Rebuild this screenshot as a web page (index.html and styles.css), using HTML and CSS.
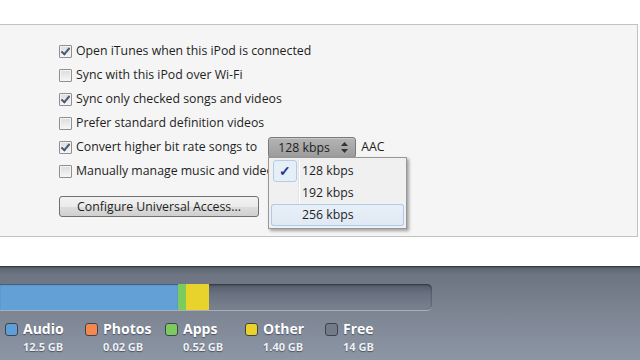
FILE: index.html
```html
<!DOCTYPE html>
<html>
<head>
<meta charset="utf-8">
<title>iPod Options</title>
<link rel="stylesheet" href="styles.css">
</head>
<body>
<div class="panel">
  <div class="opts">
    <div class="row"><span class="cb on"></span>Open iTunes when this iPod is connected</div>
    <div class="row"><span class="cb"></span>Sync with this iPod over Wi-Fi</div>
    <div class="row"><span class="cb on"></span>Sync only checked songs and videos</div>
    <div class="row"><span class="cb"></span>Prefer standard definition videos</div>
    <div class="row"><span class="cb on"></span>Convert higher bit rate songs to
      <span class="sel">128 kbps<svg class="arr" width="7" height="11" viewBox="0 0 7 11"><path d="M3.5 0L7 4H0z M0 7h7L3.5 11z" fill="#333"/></svg></span><span class="aac">AAC</span>
    </div>
    <div class="row"><span class="cb"></span>Manually manage music and videos</div>
    <div class="btn">Configure Universal Access...</div>
  </div>
  <ul class="menu">
    <li class="cur"><span class="tick">&#10003;</span>128 kbps</li>
    <li>192 kbps</li>
    <li class="hov">256 kbps</li>
  </ul>
</div>
<div class="cap">
  <div class="bar">
    <span class="seg audio" style="width:178px"></span><span class="seg apps" style="width:8px"></span><span class="seg other" style="width:23px"></span>
  </div>
  <div class="legend">
    <div class="key"><span class="sw audio"></span><b>Audio</b><i>12.5 GB</i></div>
    <div class="key"><span class="sw photos"></span><b>Photos</b><i>0.02 GB</i></div>
    <div class="key"><span class="sw apps"></span><b>Apps</b><i>0.52 GB</i></div>
    <div class="key"><span class="sw other"></span><b>Other</b><i>1.40 GB</i></div>
    <div class="key"><span class="sw free"></span><b>Free</b><i>14 GB</i></div>
  </div>
</div>
</body>
</html>
```
FILE: styles.css
```css
body{margin:0;background:#fff;font:12.3px "Open Sans",sans-serif;color:#1e1e1e;overflow:hidden;}
.panel{position:relative;margin:24px 0 0 -1px;width:637px;height:211px;background:#f5f5f5;border:1px solid #c2c2c2;}
.opts{padding:14px 0 0 59px;}
.row{height:24px;line-height:24px;display:flex;align-items:center;white-space:nowrap;}
.cb{width:11px;height:11px;border:1px solid #8e8f8f;border-radius:1px;background:linear-gradient(#dcdcdc,#f6f6f6);margin-right:4px;position:relative;box-shadow:inset 0 0 0 1px #f4f4f4;}
.cb.on:after{content:"";position:absolute;left:3px;top:0px;width:3px;height:7px;border:solid #4a5a78;border-width:0 2px 2px 0;transform:rotate(40deg);}
.sel{display:inline-block;position:relative;margin-left:11px;width:77px;height:19px;line-height:19px;padding-left:9px;background:linear-gradient(#b4b4b4,#9c9c9c);border:1px solid #7a7a7a;border-radius:3px;box-shadow:inset 0 1px 0 #c8c8c8;}
.arr{position:absolute;right:7px;top:4px;}
.aac{margin-left:5px;}
.btn{margin-top:13px;width:198px;height:19px;line-height:19px;text-align:center;border:1px solid #707070;border-radius:3px;background:linear-gradient(#f2f2f2 0,#ebebeb 50%,#dddddd 51%,#cfcfcf);}
.menu{position:absolute;left:268px;top:132px;margin:0;padding:2px;list-style:none;width:133px;background:#f0f0f0;border:1px solid #979797;box-shadow:2px 2px 3px rgba(0,0,0,.35);}
.menu:before{content:"";position:absolute;left:29px;top:2px;bottom:2px;border-left:1px solid #e2e3e3;border-right:1px solid #fff;}
.menu li{position:relative;height:22px;line-height:22px;padding-left:31px;border-radius:3px;}
.menu li.hov{background:linear-gradient(#e8eff7,#dfe9f4);box-shadow:inset 0 0 0 1px #aecbec;}
.tick{position:absolute;left:2px;top:0;width:22px;height:20px;line-height:20px;text-align:center;color:#1e3c8c;font-size:14px;font-weight:bold;background:#e6eef8;border:1px solid #b3cbe8;border-radius:3px;}
.cap{margin-top:29px;height:94px;background:linear-gradient(#2c313b 0,#5c6371 2px,#6c7381 8px,#7d8593 50%,#8d96a5 100%);padding-top:18px;box-sizing:border-box;}
.bar{margin-left:-6px;width:438px;height:26px;border-radius:0 5px 5px 0;background:linear-gradient(#545b68,#6a7180 40%,#7a8290);box-shadow:inset 0 1px 2px #2e3440,0 1px 0 #a8b0bd;display:flex;overflow:hidden;}
.seg{display:block;height:100%;}
.seg.audio{background:#62a0d6;box-shadow:inset 0 1px 1px #3c5a80;margin-left:6px;}
.seg.apps{background:#7ccb5e;}
.seg.other{background:#e8d22c;}
.legend{display:flex;padding:11px 0 0 5px;}
.key{width:80px;position:relative;padding-left:18px;box-sizing:border-box;color:#fff;}
.key b{display:block;font:bold 14px/16px "Open Sans",sans-serif;text-shadow:0 1px 1px #4a5060;}
.key i{display:block;font:bold 11px/14px "Open Sans",sans-serif;font-style:normal;margin-top:3px;color:#eef0f4;text-shadow:0 1px 1px #4a5060;}
.sw{position:absolute;left:0;top:2px;width:11px;height:11px;border:1px solid #3c4250;border-radius:3px;}
.sw.audio{background:#5f9ed6;}
.sw.photos{background:#f4884e;}
.sw.apps{background:#7ccb5e;}
.sw.other{background:#ead22a;}
.sw.free{background:#737b89;}
```
